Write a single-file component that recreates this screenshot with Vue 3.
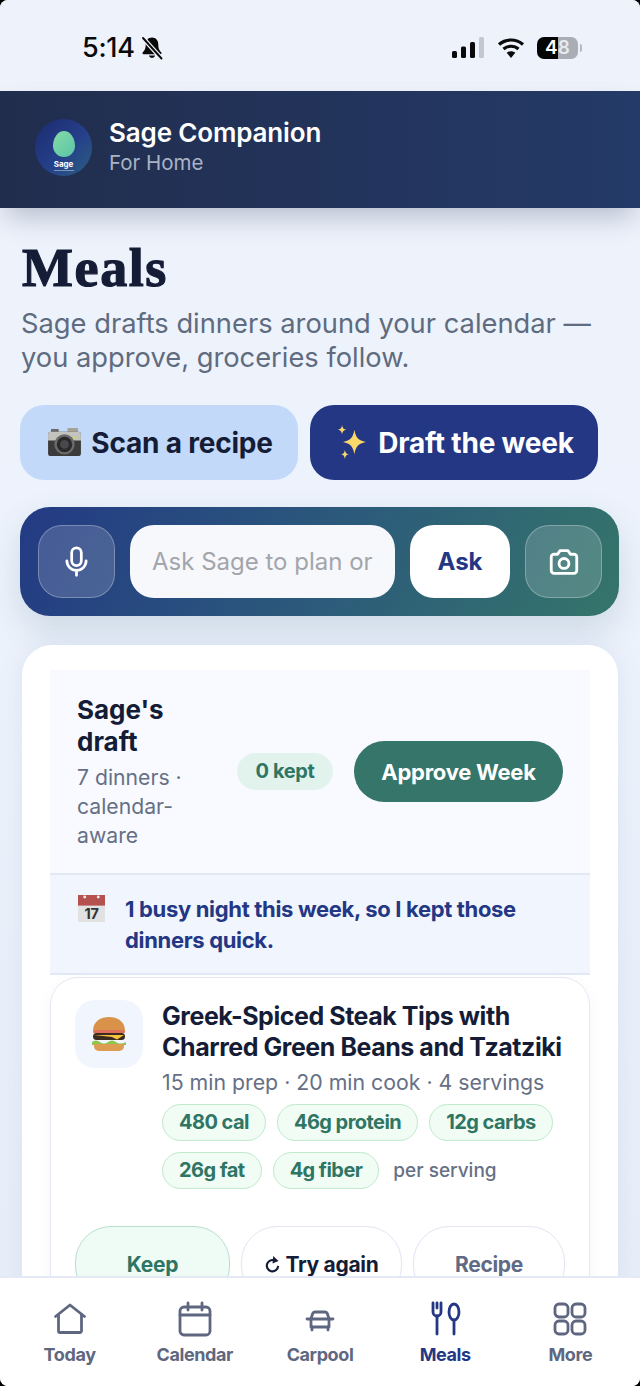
<template>
  <div class="phone">
    <!-- Status bar -->
    <div class="status">
      <div class="status-left">
        <span class="time">5:14</span>
        <svg class="bell" viewBox="0 0 24 24" width="24" height="24">
          <path d="M12 1.500c-3.800 0-6.300 2.900-6.300 6.800 0 4.700-1.300 6.400-3 8.200-.6.700-.2 1.700.8 1.700h17c1 0 1.400-1 .8-1.700-1.700-1.800-3-3.500-3-8.200 0-3.900-2.500-6.800-6.300-6.800z" fill="#0a0a0a"/>
          <path d="M8.800 19.500a3.300 3.300 0 0 0 6.400 0z" fill="#0a0a0a"/>
          <path d="M2.500 1.500l19 21" stroke="#edf2fb" stroke-width="4.500"/>
          <path d="M3 2l18.500 20.500" stroke="#0a0a0a" stroke-width="1.900" stroke-linecap="round"/>
        </svg>
      </div>
      <div class="status-right">
        <svg viewBox="0 0 32 24" width="32" height="24">
          <rect x="0" y="15" width="5" height="7" rx="1.500" fill="#0a0a0a"/>
          <rect x="9" y="10.500" width="5" height="11.500" rx="1.500" fill="#0a0a0a"/>
          <rect x="18" y="6" width="5" height="16" rx="1.500" fill="#0a0a0a"/>
          <rect x="27" y="1" width="5" height="21" rx="1.500" fill="#c3c8d0"/>
        </svg>
        <svg class="wifi" viewBox="0 0 28 22" width="28" height="22">
          <path d="M2 7.500c6.800-6 17.200-6 24 0M6.500 12c4.300-3.700 10.700-3.700 15 0" fill="none" stroke="#0a0a0a" stroke-width="3.200"/>
          <path d="M14 21l-4.300-5.200c2.500-2 6.100-2 8.600 0z" fill="#0a0a0a"/>
        </svg>
        <div class="battery"><span class="b-a">4</span><span class="b-b">8</span></div>
        <div class="battery-tip"></div>
      </div>
    </div>

    <!-- App header -->
    <header class="app-head">
      <div class="logo">
        <div class="leaf"></div>
        <div class="logo-name">Sage</div>
        <div class="logo-sub"></div>
      </div>
      <div>
        <div class="app-name">Sage Companion</div>
        <div class="app-sub">For Home</div>
      </div>
    </header>

    <main class="content">
      <h1 class="page-title">Meals</h1>
      <p class="page-sub">Sage drafts dinners around your calendar — you approve, groceries follow.</p>

      <div class="cta-row">
        <button class="cta cta-light">
          <svg viewBox="0 0 36 30" width="35" height="29">
            <rect x="4" y="1" width="8" height="4" fill="#6b6b6b"/>
            <rect x="21" y="0" width="11" height="6" rx="1" fill="#a3a396"/>
            <rect x="1" y="4" width="34" height="25" rx="3" fill="#3b3b3b"/>
            <path d="M1 7a3 3 0 0 1 3-3h28a3 3 0 0 1 3 3v6H1z" fill="#c4c4bf"/>
            <circle cx="18" cy="17" r="10.500" fill="#6a6a6a"/>
            <circle cx="18" cy="17" r="8" fill="#2a2a2a"/>
            <circle cx="18" cy="17" r="4.500" fill="#47494d"/>
            <circle cx="29" cy="10" r="1.300" fill="#d9d34a"/>
          </svg>
          Scan a recipe
        </button>
        <button class="cta cta-dark">
          <svg viewBox="0 0 34 38" width="33" height="36">
            <path d="M19 5c1.500 8.500 4 11 12 13-8 2-10.500 4.500-12 13-1.500-8.500-4-11-12-13 8-2 10.500-4.500 12-13z" fill="#fbd96b"/>
            <path d="M6 0c.6 3.500 1.500 4.400 4.500 5-3 .6-3.900 1.500-4.500 5-.6-3.500-1.500-4.400-4.500-5 3-.6 3.900-1.500 4.500-5zM9 26c.6 3.500 1.500 4.400 4.500 5-3 .6-3.900 1.500-4.500 5-.6-3.500-1.500-4.400-4.500-5 3-.6 3.900-1.500 4.500-5z" fill="#fbd96b"/>
          </svg>
          Draft the week
        </button>
      </div>

      <!-- Ask bar -->
      <div class="ask-bar">
        <button class="glass">
          <svg viewBox="0 0 24 24" width="33" height="33" fill="none" stroke="#fff" stroke-width="2" stroke-linecap="round">
            <rect x="8.500" y="2" width="7" height="13" rx="3.500"/>
            <path d="M5 11.500a7 7 0 0 0 14 0M12 18.500V22"/>
          </svg>
        </button>
        <div class="ask-input">Ask Sage to plan or</div>
        <button class="ask-btn">Ask</button>
        <button class="glass">
          <svg viewBox="0 0 24 24" width="34" height="34" fill="none" stroke="#fff" stroke-width="2" stroke-linejoin="round">
            <path d="M3 8.500a2 2 0 0 1 2-2h2.500L9.200 4h5.600l1.700 2.500H19a2 2 0 0 1 2 2V18a2 2 0 0 1-2 2H5a2 2 0 0 1-2-2z"/>
            <circle cx="12" cy="13" r="3.500"/>
          </svg>
        </button>
      </div>

      <!-- Draft card -->
      <section class="card">
        <div class="draft-head">
          <div class="draft-info">
            <div class="draft-title">Sage's draft</div>
            <div class="draft-meta">7 dinners · calendar-aware</div>
          </div>
          <span class="kept">0 kept</span>
          <button class="approve">Approve Week</button>
        </div>

        <div class="notice">
          <svg class="notice-icon" viewBox="0 0 28 28" width="27" height="27">
            <rect x="0" y="0" width="28" height="28" fill="#e2e2e2"/>
            <rect x="0" y="0" width="28" height="11" fill="#b5524f"/>
            <circle cx="7" cy="2" r="1.500" fill="#eee"/>
            <circle cx="21" cy="2" r="1.500" fill="#eee"/>
            <text x="14" y="25" text-anchor="middle" font-size="15" font-family="Inter, sans-serif" fill="#333">17</text>
          </svg>
          <span>1 busy night this week, so I kept those dinners quick.</span>
        </div>

        <article class="recipe">
          <div class="recipe-top">
            <div class="recipe-icon">
              <svg viewBox="0 0 36 36" width="36" height="36">
                <path d="M2 15C2 5 10 1 18 1s16 4 16 14z" fill="#d9924a"/>
                <rect x="2" y="14" width="32" height="3.500" rx="1.700" fill="#e0705a"/>
                <rect x="2" y="17" width="32" height="7" rx="3.500" fill="#3c2a20"/>
                <path d="M3 19h30l-7 4.500-5-2.500z" fill="#f6c33c"/>
                <path d="M1 26q4-3 8 0t8 0 8 0 10 0v3H1z" fill="#8fc64f"/>
                <path d="M3 28h30v2c0 4-3 5-6 5H9c-3 0-6-1-6-5z" fill="#dc9c52"/>
              </svg>
            </div>
            <div class="recipe-body">
              <h3 class="recipe-title">Greek-Spiced Steak Tips with Charred Green Beans and Tzatziki</h3>
              <div class="recipe-meta">15 min prep · 20 min cook · 4 servings</div>
              <div class="chips">
                <span v-for="c in macros" :key="c" class="chip">{{ c }}</span>
                <span class="per">per serving</span>
              </div>
            </div>
          </div>
          <div class="actions">
            <button class="act act-keep">Keep</button>
            <button class="act act-retry">
              <svg viewBox="0 0 24 24" width="17" height="19" fill="none" stroke="#151c36" stroke-width="3">
                <path d="M16.500 7a8 8 0 1 0 3.500 7"/>
                <path d="M13 0l7.500 7L12 10.500z" fill="#151c36" stroke="none"/>
              </svg>
              Try again
            </button>
            <button class="act act-recipe">Recipe</button>
          </div>
        </article>
      </section>
    </main>

    <!-- Bottom nav -->
    <nav class="tabs">
      <div v-for="t in tabs" :key="t.label" class="tab" :class="{ active: t.label === 'Meals' }">
        <svg viewBox="0 0 36 38" width="36" height="38" fill="none" stroke="currentColor" stroke-width="2.800" stroke-linecap="round" stroke-linejoin="round">
          <path v-for="d in t.paths" :key="d" :d="d"/>
        </svg>
        <span>{{ t.label }}</span>
      </div>
    </nav>
  </div>
</template>

<script setup>
const macros = ['480 cal', '46g protein', '12g carbs', '26g fat', '4g fiber']

const tabs = [
  { label: 'Today', paths: ['M3.500 16.500 18 5l14.500 11.500', 'M6.500 15V31a1.500 1.500 0 0 0 1.500 1.500h20a1.500 1.500 0 0 0 1.500-1.500V15'] },
  { label: 'Calendar', paths: ['M7 7h22a4 4 0 0 1 4 4v20a4 4 0 0 1-4 4H7a4 4 0 0 1-4-4V11a4 4 0 0 1 4-4z', 'M3 15h30', 'M11 3v7M25 3v7'] },
  { label: 'Carpool', paths: ['M9 19l1.500-5a3 3 0 0 1 3-2h9a3 3 0 0 1 3 2l1.500 5', 'M5 19h26', 'M9 19v8h18v-8', 'M10 27v3M26 27v3'] },
  { label: 'Meals', paths: ['M6 3v9a4 4 0 0 0 8 0V3', 'M10 3v5', 'M10 16v18', 'M27 4c-2.800 0-5 3.500-5 8s2.200 8 5 8 5-3.500 5-8-2.200-8-5-8z', 'M27 20v14'] },
  { label: 'More', paths: ['M7 4h5a4 4 0 0 1 4 4v5a4 4 0 0 1-4 4H7a4 4 0 0 1-4-4V8a4 4 0 0 1 4-4z', 'M24 4h5a4 4 0 0 1 4 4v5a4 4 0 0 1-4 4h-5a4 4 0 0 1-4-4V8a4 4 0 0 1 4-4z', 'M7 21h5a4 4 0 0 1 4 4v5a4 4 0 0 1-4 4H7a4 4 0 0 1-4-4v-5a4 4 0 0 1 4-4z', 'M24 21h5a4 4 0 0 1 4 4v5a4 4 0 0 1-4 4h-5a4 4 0 0 1-4-4v-5a4 4 0 0 1 4-4z'] },
]
</script>

<style>
html, body {
  margin: 0;
  background: #000;
}
</style>

<style scoped>
.phone {
  width: 640px;
  height: 1386px;
  display: flex;
  flex-direction: column;
  overflow: hidden;
  border-radius: 8px;
  background: linear-gradient(180deg, #edf2fb 0%, #edf3fc 40%, #e6edf8 100%);
  font-family: Inter, sans-serif;
  color: #151c36;
}

button {
  font-family: inherit;
  border: none;
  padding: 0;
}

/* Status bar */
.status {
  height: 91px;
  flex-shrink: 0;
  display: flex;
  justify-content: space-between;
  align-items: center;
  padding: 4px 58px 0 82px;
  box-sizing: border-box;
  background: #edf2fb;
}

.status-left,
.status-right {
  display: flex;
  align-items: center;
}

.time {
  font-size: 27px;
  font-weight: 500;
  letter-spacing: -0.3px;
  color: #0a0a0a;
  margin-right: 5px;
}

.wifi {
  margin: 0 12px 0 13px;
}

.battery {
  width: 41px;
  height: 22px;
  border-radius: 7px;
  background: linear-gradient(90deg, #050505 50%, #a9adb5 50%);
  display: flex;
  align-items: center;
  justify-content: center;
  font-size: 19px;
  font-weight: 600;
  line-height: 22px;
}

.b-a {
  color: #fff;
}

.b-b {
  color: #e7e9ee;
}

.battery-tip {
  width: 2px;
  height: 8px;
  margin-left: 2px;
  border-radius: 0 2px 2px 0;
  background: #b4b8c0;
}

/* App header */
.app-head {
  height: 117px;
  flex-shrink: 0;
  box-sizing: border-box;
  display: flex;
  align-items: center;
  gap: 17px;
  padding: 0 35px 5px;
  background: linear-gradient(90deg, #212d4d 0%, #243a68 100%);
  box-shadow: 0 14px 26px -6px rgba(32, 48, 80, 0.28);
  position: relative;
  z-index: 1;
}

.logo {
  width: 57px;
  height: 57px;
  border-radius: 50%;
  background: linear-gradient(135deg, #1c2a6e 0%, #25408a 55%, #2b5f80 100%);
  display: flex;
  flex-direction: column;
  align-items: center;
  padding-top: 12px;
  box-sizing: border-box;
}

.leaf {
  width: 22px;
  height: 26px;
  border-radius: 50% 50% 50% 50% / 58% 58% 42% 42%;
  background: linear-gradient(135deg, #84dca6, #5cc4a8);
}

.logo-name {
  font-size: 8px;
  font-weight: 700;
  color: #fff;
  line-height: 10px;
  margin-top: 2px;
}

.logo-sub {
  width: 20px;
  height: 1px;
  background: rgba(255, 255, 255, 0.4);
  margin-top: 1px;
}

.app-name {
  font-size: 26px;
  font-weight: 600;
  letter-spacing: -0.15px;
  line-height: 32px;
  color: #fff;
}

.app-sub {
  font-size: 20.500px;
  line-height: 28px;
  color: #a9b3c6;
}

/* Main */
.content {
  flex: 1;
  min-height: 0;
  overflow: hidden;
  padding: 30px 20px 0;
}

.page-title {
  margin: 0 0 0 2px;
  font-family: "Liberation Serif", serif;
  font-size: 54px;
  font-weight: 700;
  letter-spacing: 1.600px;
  -webkit-text-stroke: 1.200px #151c36;
  line-height: 60px;
  color: #151c36;
}

.page-sub {
  margin: 9px 0 0 1px;
  font-size: 27.300px;
  line-height: 34px;
  color: #5f6b7f;
}

.cta-row {
  display: flex;
  gap: 12px;
  margin-top: 30px;
}

.cta {
  height: 75px;
  border-radius: 24px;
  display: flex;
  align-items: center;
  justify-content: center;
  gap: 9px;
  padding-left: 2px;
  font-size: 28px;
  font-weight: 700;
  letter-spacing: -0.2px;
}

.cta-light {
  width: 278px;
  background: #c2d9fa;
  color: #151c36;
}

.cta-dark {
  width: 288px;
  background: #233784;
  color: #fff;
}

.ask-bar {
  margin-top: 27px;
  width: 599px;
  height: 109px;
  box-sizing: border-box;
  border-radius: 30px;
  padding: 18px 17px 18px 18px;
  display: flex;
  gap: 15px;
  background: linear-gradient(115deg, #233a84 0%, #2c5c7a 55%, #35756a 100%);
  box-shadow: 0 14px 34px rgba(35, 80, 110, 0.16);
}

.glass {
  width: 77px;
  flex-shrink: 0;
  border-radius: 24px;
  background: rgba(255, 255, 255, 0.16);
  border: 1.5px solid rgba(255, 255, 255, 0.28);
  display: flex;
  align-items: center;
  justify-content: center;
}

.ask-input {
  flex: 1;
  border-radius: 24px;
  background: #f6f8fc;
  color: #a3a5aa;
  font-size: 24px;
  padding-left: 22px;
  display: flex;
  align-items: center;
  white-space: nowrap;
}

.ask-btn {
  width: 100px;
  flex-shrink: 0;
  border-radius: 24px;
  background: #fff;
  color: #233784;
  font-size: 24px;
  font-weight: 700;
}

/* Draft card */
.card {
  margin: 29px 2px 0;
  width: 596px;
  box-sizing: border-box;
  padding: 25px 28px 0;
  border-radius: 30px 30px 0 0;
  background: #fff;
  box-shadow: 0 0 26px rgba(90, 110, 170, 0.1);
}

.draft-head {
  height: 205px;
  box-sizing: border-box;
  display: flex;
  align-items: center;
  padding: 0 27px;
  background: #f8faff;
  border-bottom: 2px solid #e2e9f5;
}

.draft-info {
  width: 134px;
  flex-shrink: 0;
}

.draft-title {
  font-size: 26px;
  font-weight: 700;
  line-height: 32px;
  color: #151c36;
}

.draft-meta {
  margin-top: 5px;
  font-size: 21.200px;
  line-height: 29px;
  color: #667085;
}

.kept {
  margin-left: 26px;
  width: 96px;
  flex-shrink: 0;
  text-align: center;
  white-space: nowrap;
  height: 37px;
  line-height: 37px;
  border-radius: 19px;
  background: #e2f3ed;
  color: #2f7564;
  font-size: 20px;
  font-weight: 700;
  letter-spacing: -0.4px;
}

.approve {
  margin-left: 21px;
  width: 209px;
  height: 61px;
  flex-shrink: 0;
  border-radius: 31px;
  background: #35756a;
  color: #fff;
  font-size: 22px;
  font-weight: 700;
  letter-spacing: -0.25px;
}

.notice {
  height: 100px;
  box-sizing: border-box;
  display: flex;
  gap: 20px;
  padding: 19px 27px 0 28px;
  background: #f0f5fe;
  border-bottom: 2px solid #e2e9f5;
  color: #233784;
  font-size: 22px;
  font-weight: 700;
  letter-spacing: -0.33px;
  line-height: 31px;
}

.notice-icon {
  flex-shrink: 0;
  margin-top: 1px;
}

.recipe {
  height: 340px;
  margin-top: 2px;
  box-sizing: border-box;
  padding: 22px 24px 0;
  border: 1.5px solid #e5e8f4;
  border-radius: 28px;
  box-shadow: 0 4px 14px rgba(90, 110, 170, 0.06);
}

.recipe-top {
  display: flex;
  gap: 19px;
}

.recipe-icon {
  width: 68px;
  height: 68px;
  flex-shrink: 0;
  border-radius: 20px;
  background: #f0f5fe;
  display: flex;
  align-items: center;
  justify-content: center;
}

.recipe-title {
  margin: 1px 0 0;
  font-size: 25px;
  font-weight: 700;
  letter-spacing: -0.45px;
  line-height: 31px;
  color: #151c36;
  width: 404px;
}

.recipe-meta {
  margin-top: 5px;
  font-size: 21.300px;
  line-height: 28px;
  color: #667085;
  white-space: nowrap;
}

.chips {
  display: flex;
  flex-wrap: wrap;
  align-items: center;
  gap: 11px;
  margin-top: 8px;
  width: 404px;
}

.chip {
  height: 37px;
  box-sizing: border-box;
  line-height: 34px;
  padding: 0 16px;
  border: 1.5px solid #bfeacd;
  border-radius: 19px;
  background: #f0fcf4;
  color: #2f7564;
  font-size: 20px;
  font-weight: 700;
  letter-spacing: -0.55px;
}

.per {
  margin-left: 3px;
  font-size: 19px;
  font-weight: 500;
  color: #667085;
}

.actions {
  display: flex;
  gap: 11px;
  margin-top: 37px;
}

.act {
  height: 76px;
  box-sizing: border-box;
  border-radius: 36px;
  background: #fff;
  border: 1.5px solid #e2e5f2;
  font-size: 21px;
  font-weight: 700;
  letter-spacing: -0.3px;
  display: flex;
  align-items: center;
  justify-content: center;
  gap: 4px;
}

.act-keep {
  width: 155px;
  background: #effcf6;
  border-color: #b7e0cd;
  color: #2f7564;
}

.act-retry {
  width: 161px;
  color: #151c36;
}

.act-recipe {
  width: 152px;
  color: #5f6b85;
}

/* Bottom nav */
.tabs {
  height: 110px;
  flex-shrink: 0;
  box-sizing: border-box;
  display: flex;
  padding: 22px 7px 0;
  background: #fff;
  border-top: 2px solid #e5e8f5;
  position: relative;
  z-index: 2;
}

.tab {
  flex: 1;
  display: flex;
  flex-direction: column;
  align-items: center;
  gap: 6px;
  color: #5f6780;
  font-size: 18px;
  font-weight: 700;
  letter-spacing: -0.4px;
  line-height: 22px;
}

.tab.active {
  color: #233784;
}
</style>
